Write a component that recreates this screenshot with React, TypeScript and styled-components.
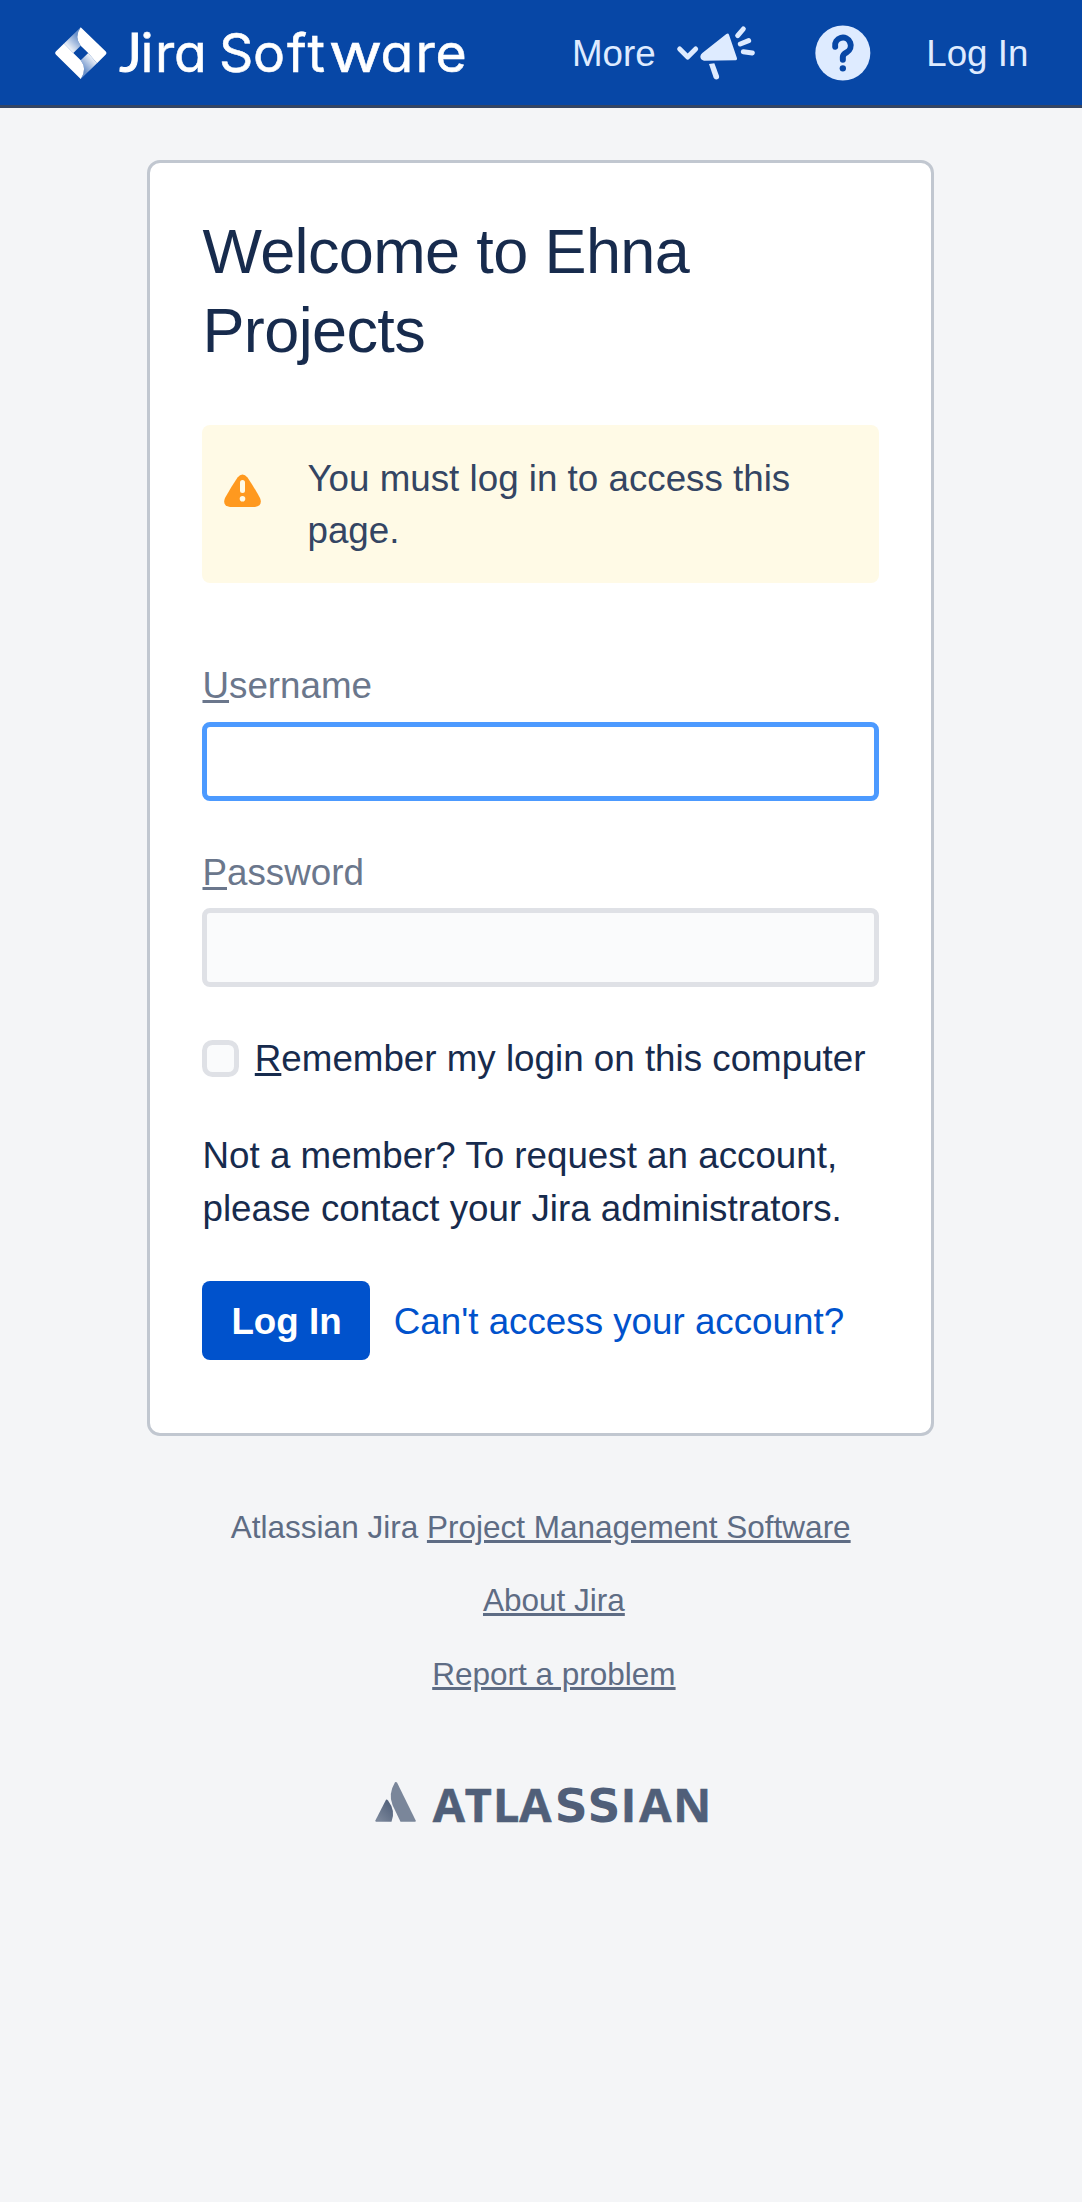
import React from "react";
import styled, { createGlobalStyle } from "styled-components";

const Global = createGlobalStyle`
  * { box-sizing: border-box; }
  body { margin: 0; background: #f4f5f7; font-family: "Liberation Sans", Arial, sans-serif; font-size: 36.76px; line-height: 52.5px; color: #172b4d; }
`;
const Page = styled.div`min-height: 2202px; background: #f4f5f7;`;
const Header = styled.header`
  width: 1081.5px; height: 108px; padding-left: 50px; display: flex; align-items: center;
  background: #0747a6; border-bottom: 3px solid #344563; color: #deebff;
`;
const Brand = styled.a`display: flex; width: 522px;`;
const NavText = styled.a<{ $gap: number }>`margin-right: ${p => p.$gap}px; padding-top: 3px; white-space: nowrap; line-height: 52.5px;`;
const Icon = styled.svg<{ $gap?: number }>`display: block; flex: none; overflow: visible; margin-right: ${p => p.$gap ?? 0}px;`;
const Wordmark = styled.text`fill: #fff; stroke: #fff; stroke-width: 0.5px; font-family: Inter, sans-serif; font-size: 53.5px; font-feature-settings: "cv11"; white-space: pre;`;
const LatoSpan = styled.tspan`font-family: Lato, sans-serif; stroke-width: 1px;`;
const CompanyMark = styled.text`fill: #505f79; stroke: #505f79; stroke-width: 0.6px; font-family: "Open Sans", sans-serif; font-size: 46.7px; font-weight: 700;`;
const WideSpan = styled.tspan`font-family: "DejaVu Sans", sans-serif; font-size: 45.7px; stroke-width: 0;`;
const Card = styled.main`
  width: 786.7px; height: 1275.8px; margin: 52px 0 0 147.2px; padding: 49px 52.3px;
  background: #fff; border: 3px solid #c1c7d0; border-radius: 13px;
`;
const Title = styled.h1`margin: 0; font-size: 63px; line-height: 79px; font-weight: 400; letter-spacing: -0.63px;`;
const Warning = styled.div`
  display: flex; width: 676.5px; height: 157.6px; margin-top: 55px; padding: 27.8px 21px; background: #fffae6;
  border-radius: 8px; color: #344563;
`;
const WarningIcon = styled(Icon)`margin: 21.5px 0 0 0.7px;`;
const WarningText = styled.p`margin: 0 0 0 46.3px; width: 520px;`;
const Field = styled.div<{ $top: number }>`margin-top: ${p => p.$top}px; height: 141.2px;`;
const Label = styled.label<{ $drop?: number }>`display: block; height: 62.4px; padding-top: ${p => p.$drop ?? 0}px; color: #6b778c;`;
const Key = styled.span`text-decoration: underline;`;
const Input = styled.input<{ $active?: boolean }>`
  display: block; width: 676.6px; height: 78.8px; padding: 0 16px; border: 5.25px solid ${p => (p.$active ? "#4c9aff" : "#dfe1e6")};
  border-radius: 8px; background: ${p => (p.$active ? "#fff" : "#fafbfc")}; outline: none; font: inherit;
`;
const Remember = styled.label`display: flex; align-items: center; margin-top: 45px; height: 52.5px; white-space: nowrap;`;
const RememberText = styled.span`padding-top: 2px;`;
const Check = styled.span`width: 36.8px; height: 36.8px; margin-right: 15.5px; border: 5.25px solid #dfe1e6; border-radius: 10.5px; background: #fafbfc;`;
const Note = styled.p`margin: 45.8px 0 0; white-space: nowrap;`;
const Actions = styled.div`display: flex; align-items: center; margin-top: 45.4px;`;
const Submit = styled.button`
  width: 168px; height: 78.8px; padding: 3px 0 0; border: 0; border-radius: 8px; background: #0052cc;
  color: #fff; font: 700 36.76px/75.8px "Liberation Sans", Arial, sans-serif;
`;
const Help = styled.a`margin-left: 23.3px; padding-top: 4px; color: #0052cc; white-space: nowrap;`;
const Footer = styled.footer`
  display: flex; flex-direction: column; align-items: center; width: 1081.5px; padding-top: 65.2px;
  color: #5e6c84; font-size: 31.5px; line-height: 52.5px;
`;
const FootRow = styled.div<{ $inset?: number }>`height: 73.5px; padding-left: ${p => p.$inset ?? 0}px; white-space: nowrap;`;
const FootLink = styled.a`text-decoration: underline;`;
const Company = styled.a`display: block; margin-top: 59.5px; padding-left: 2.5px;`;

export default function App() {
  return (
    <Page>
      <Global />
      <Header>
        <Brand>
          <Icon width="420" height="64" viewBox="50 20 420 64">
            <defs>
              <linearGradient id="jt" gradientUnits="userSpaceOnUse" x1="80" y1="34" x2="65" y2="49"><stop offset="0.1" stopColor="#fff" stopOpacity="0.4" /><stop offset="0.9" stopColor="#fff" /></linearGradient>
              <linearGradient id="jb" gradientUnits="userSpaceOnUse" x1="81.5" y1="70" x2="96.5" y2="55"><stop offset="0.1" stopColor="#fff" stopOpacity="0.4" /><stop offset="0.9" stopColor="#fff" /></linearGradient>
            </defs>
            <path d="M80.7 26.3L105.8 50.5Q107.3 52 105.8 53.5L97 62.3L88.2 52L80.7 44.7Q74 36 80.7 26.3Z" fill="#fff" />
            <path d="M80.7 78L55.8 53.5Q54.3 52 55.8 50.5L64 42.5L73.3 52L80.7 59.3Q87.5 68 80.7 78Z" fill="#fff" />
            <path d="M80.7 26.3L64 42.5L73.3 52L80.7 44.7Q74 36 80.7 26.3Z" fill="url(#jt)" />
            <path d="M80.7 78L97 62.3L88.2 52L80.7 59.3Q87.5 68 80.7 78Z" fill="url(#jb)" />
            <Wordmark y="71.3">
              <LatoSpan x="119.3">J</LatoSpan><tspan x="140.5 155 174 205 219 253 287 307.5">ira Soft</tspan>
            </Wordmark>
            <Wordmark transform="translate(328.8 71.3) scale(1.22 1)">w</Wordmark>
            <Wordmark y="71.3" x="380.5 415.5 435.5">are</Wordmark>
          </Icon>
        </Brand>
        <NavText $gap={21.5}>More</NavText>
        <Icon width="22" height="16" viewBox="52 105 66 48" $gap={1}>
          <path d="M60 117L84 141L108 117" fill="none" stroke="#deebff" strokeWidth="15" strokeLinecap="round" strokeLinejoin="round" />
        </Icon>
        <Icon width="55" height="54" viewBox="120 47 165 162" $gap={60}>
          <path d="M199 71Q205 67 207 73L231 144Q232 149 228 149.5L132 151Q121 149 121 138Q122 132 127 128Z" fill="#deebff" />
          <path d="M147 161L163 159L177 196Q179 204 172 207Q164 209 161 202Z" fill="#deebff" />
          <path d="M233 76L250 56M241 101L266 91M250 124L277 128" fill="none" stroke="#deebff" strokeWidth="15" strokeLinecap="round" />
        </Icon>
        <Icon width="56" height="56" viewBox="464 43 168 168" $gap={55}>
          <circle cx="547.5" cy="127" r="82.5" fill="#deebff" />
          <path d="M524.5 108A23.5 23.5 0 1 1 559 125Q547.5 131 547.5 139V147" fill="none" stroke="#0747a6" strokeWidth="18" strokeLinecap="round" />
          <circle cx="547.5" cy="173" r="9.5" fill="#0747a6" />
        </Icon>
        <NavText $gap={0}>Log In</NavText>
      </Header>
      <Card>
        <Title>Welcome to Ehna<br />Projects</Title>
        <Warning>
          <WarningIcon width="37" height="34" viewBox="0 0 37 34">
            <path d="M13.5 3.5Q18.5-2.5 23.5 3.5Q30 13 36 24Q39 32 31 33H6Q-2 32 1 24Q7 13 13.5 3.5Z" fill="#ff991f" />
            <path d="M18.5 8.5V16.5" stroke="#fffae6" strokeWidth="5" strokeLinecap="round" />
            <circle cx="18.5" cy="24.8" r="2.8" fill="#fffae6" />
          </WarningIcon>
          <WarningText>You must log in to access this page.</WarningText>
        </Warning>
        <Field $top={77}><Label htmlFor="user"><Key>U</Key>sername</Label><Input id="user" $active /></Field>
        <Field $top={45.2}><Label htmlFor="pass" $drop={0.8}><Key>P</Key>assword</Label><Input id="pass" type="password" /></Field>
        <Remember><Check /><RememberText><Key>R</Key>emember my login on this computer</RememberText></Remember>
        <Note>Not a member? To request an account,<br />please contact your Jira administrators.</Note>
        <Actions><Submit>Log In</Submit><Help>Can't access your account?</Help></Actions>
      </Card>
      <Footer>
        <FootRow>Atlassian Jira <FootLink>Project Management Software</FootLink></FootRow>
        <FootRow $inset={26.3}><FootLink>About Jira</FootLink></FootRow>
        <FootRow $inset={26.3}><FootLink>Report a problem</FootLink></FootRow>
        <Company>
          <Icon width="336" height="44" viewBox="374 1781 336 44">
            <defs><linearGradient id="at" x1="1" y1="0.2" x2="0.3" y2="1"><stop offset="0" stopColor="#505f79" /><stop offset="1" stopColor="#7a869a" /></linearGradient></defs>
            <path d="M386 1799.7Q387 1799.2 388 1800.5Q396 1811 391.5 1821.7H376Q375 1821.5 375.5 1820.3Z" fill="url(#at)" />
            <path d="M395 1782.3Q396 1781.7 397 1782.5L415.7 1820.5Q416 1821.7 415 1821.7H400.5L392.5 1805Q388 1794 395 1782.3Z" fill="#7a869a" />
            <CompanyMark y="1821.5">
              <tspan x="432.7 464.8 493 519.2">ATLA</tspan><WideSpan x="554.8 587.5">SS</WideSpan><tspan x="620.7 639.3 673.2">IAN</tspan>
            </CompanyMark>
          </Icon>
        </Company>
      </Footer>
    </Page>
  );
}
